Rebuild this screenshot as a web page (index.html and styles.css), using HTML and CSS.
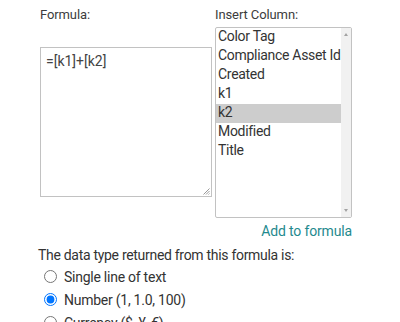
FILE: index.html
```html
<!DOCTYPE html>
<html>
<head>
<meta charset="utf-8">
<link rel="stylesheet" href="styles.css">
</head>
<body>
<div class="wrap">
  <div class="cols">
    <div class="col-left">
      <div class="label">Formula:</div>
      <div class="textarea">=[k1]+[k2]<span class="grip"><svg width="7" height="7" viewBox="0 0 7 7"><path d="M6.5 0.5 L0.5 6.5 M6.5 3 L3 6.5 M6.5 5.5 L5.5 6.5" stroke="#999" stroke-width="1" fill="none"/></svg></span></div>
    </div>
    <div class="col-right">
      <div class="label">Insert Column:</div>
      <div class="listbox">
        <div class="items">
          <div class="item">Color Tag</div>
          <div class="item">Compliance Asset Id</div>
          <div class="item">Created</div>
          <div class="item">k1</div>
          <div class="item selected">k2</div>
          <div class="item">Modified</div>
          <div class="item">Title</div>
        </div>
        <div class="scrollbar">
          <span class="arrow up"></span>
          <span class="arrow down"></span>
        </div>
      </div>
      <a class="add" href="#">Add to formula</a>
    </div>
  </div>
  <div class="returns">The data type returned from this formula is:</div>
  <label class="radio"><input type="radio" name="t"> Single line of text</label>
  <label class="radio"><input type="radio" name="t" checked> Number (1, 1.0, 100)</label>
  <label class="radio"><input type="radio" name="t"> Currency ($, ¥, €)</label>
</div>
</body>
</html>
```
FILE: styles.css
```css
html, body {
  margin: 0;
  padding: 0;
  background: #fff;
  overflow: hidden;
}
body {
  font-family: Roboto, "Open Sans", sans-serif;
  color: #444;
  font-size: 14px;
}
.wrap {
  padding: 5px 0 0 38px;
}
.cols {
  display: flex;
}
.col-left {
  width: 177px;
  box-sizing: border-box;
  padding-left: 2px;
}
.label {
  font-size: 13px;
  line-height: 19px;
  letter-spacing: -0.1px;
  color: #3c3c3c;
}
.textarea {
  position: relative;
  margin-top: 23px;
  width: 172px;
  height: 150px;
  border: 1px solid #c2c2c2;
  font-size: 14px;
  line-height: 18px;
  padding: 4px 5px;
  box-sizing: border-box;
  color: #444;
}
.grip {
  position: absolute;
  right: 1px;
  bottom: 1px;
  width: 7px;
  height: 7px;
  display: block;
  line-height: 0;
}
.col-right {
  width: 137px;
  display: flex;
  flex-direction: column;
}
.listbox {
  margin-top: 3px;
  height: 191px;
  border: 1px solid #c2c2c2;
  border-radius: 2px;
  display: flex;
  box-sizing: border-box;
}
.items {
  flex: 1;
  min-width: 0;
  overflow: hidden;
}
.item {
  font-size: 14px;
  letter-spacing: -0.3px;
  line-height: 17px;
  height: 19px;
  padding-left: 2px;
  color: #333;
  white-space: nowrap;
}
.item.selected {
  background: #cdcdcd;
}
.scrollbar {
  flex: none;
  width: 10px;
  background: #f1f1f1;
  position: relative;
}
.arrow {
  position: absolute;
  left: 3px;
  width: 0;
  height: 0;
  border-left: 2px solid transparent;
  border-right: 2px solid transparent;
}
.arrow.up {
  top: 5px;
  border-bottom: 3px solid #a3a3a3;
}
.arrow.down {
  bottom: 5px;
  border-top: 3px solid #a3a3a3;
}
.add {
  align-self: flex-end;
  margin-top: 4px;
  font-size: 14px;
  letter-spacing: -0.15px;
  line-height: 19px;
  color: #1f8a8e;
  text-decoration: none;
}
.returns {
  margin-top: 5px;
  font-size: 14px;
  letter-spacing: -0.3px;
  line-height: 19px;
  color: #333;
}
.radio {
  display: flex;
  align-items: center;
  height: 23px;
  font-size: 14px;
  letter-spacing: -0.25px;
  color: #333;
  padding-left: 3px;
}
.radio input {
  margin: 0 7px 0 3px;
  width: 13px;
  height: 13px;
}
```
